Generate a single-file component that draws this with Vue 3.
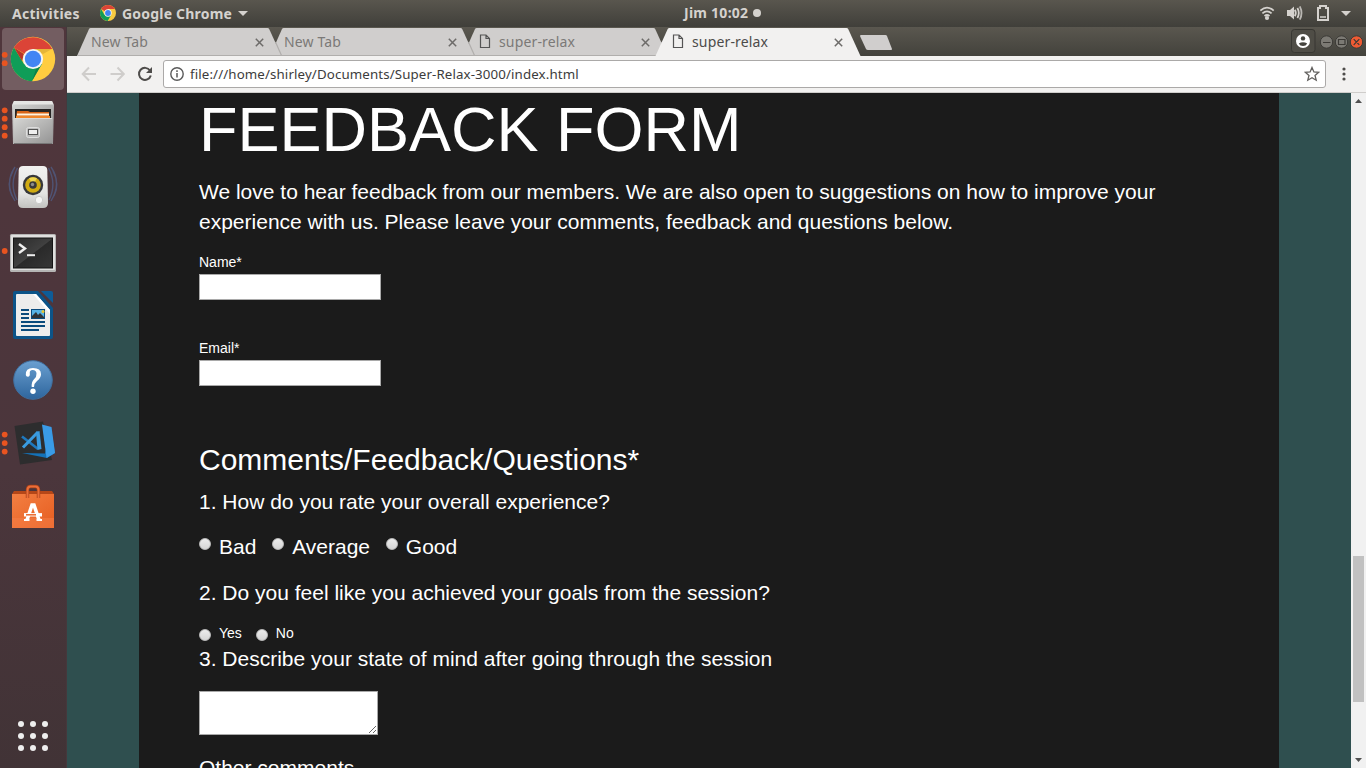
<script setup>
const tabs = [
  { title: 'New Tab', page: false, active: false },
  { title: 'New Tab', page: false, active: false },
  { title: 'super-relax', page: true, active: false },
  { title: 'super-relax', page: true, active: true },
]
const launcherDots = 9
</script>

<template>
  <div class="desktop">
    <header class="topbar">
      <span class="activities">Activities</span>
      <svg class="mini" width="16" height="16" viewBox="0 0 44 44">
        <circle cx="22" cy="22" r="22" fill="#f9cb40" />
        <path d="M22 22L3 11A22 22 0 0 1 41 11H22Z" fill="#db4437" />
        <path d="M3 11A22 22 0 0 0 21 44L31 27L12 27Z" fill="#129d58" />
        <circle cx="22" cy="22" r="10" fill="#fff" /><circle cx="22" cy="22" r="8" fill="#4285f4" />
      </svg>
      <span class="appname">Google Chrome</span>
      <i class="caret"></i>
      <span class="clock">Jim 10:02</span>
      <i class="notice"></i>
      <svg class="status" width="106" height="27" viewBox="1260 0 106 27">
        <g fill="none" stroke="#d5d2ce" stroke-width="1.8">
          <path d="M1260.3 10.6Q1267 4.6 1273.7 10.6M1262.4 13.4Q1267 9.4 1271.6 13.4M1264.5 16Q1267 14 1269.5 16" />
          <path d="M1294.8 9.8Q1296.8 13 1294.8 16.200M1297.4 8Q1300.2 13 1297.4 18" />
          <path d="M1299.8 6.400Q1303.200 13 1299.800 19.600" opacity=".8" />
          <path d="M1318 8h2v-2h6v2h2v12h-10z" stroke-width="2" />
          <path d="M1320 17h6" stroke-width="1.5" />
        </g>
        <circle cx="1267" cy="18" r="2.1" fill="#d5d2ce" />
        <path d="M1287 10h3l4-3.600v13.200l-4-3.600h-3z" fill="#d5d2ce" />
        <path d="M1341 11h10l-5 5z" fill="#d5d2ce" />
      </svg>
    </header>

    <div class="body">
      <nav class="dock">
        <svg class="item" viewBox="0 27 67 64">
          <rect x="2" y="28" width="62" height="62" rx="4" fill="#735d61" />
          <g fill="#e95420"><circle cx="4.7" cy="54.8" r="2.9" /><circle cx="4.7" cy="63.2" r="2.9" /></g>
          <circle cx="33" cy="59" r="22.2" fill="#ffcd40" />
          <path d="M33 59L14 47.5A22.2 22.2 0 0 1 52.2 49H33Z" fill="#db4437" />
          <path d="M14 47.5A22.2 22.2 0 0 0 31.9 81.2L42 64L24 64Z" fill="#0f9d58" />
          <path d="M14 47.5L22 61L24 54Z" fill="#b73429" />
          <path d="M52 49H33L43 54Z" fill="#e5b538" />
          <path d="M32 81L42 63L36 69Z" fill="#0c8148" />
          <circle cx="33" cy="59" r="10.1" fill="#f5f5f5" /><circle cx="33" cy="59" r="8.2" fill="#4285f4" />
        </svg>
        <svg class="item" viewBox="0 91 67 64">
          <defs><linearGradient id="cab" x1="0" y1="0" x2="1" y2="1"><stop offset="0" stop-color="#d6d6d4" /><stop offset="1" stop-color="#949494" /></linearGradient></defs>
          <g fill="#e95420"><circle cx="4.7" cy="110.3" r="2.9" /><circle cx="4.7" cy="118.7" r="2.9" /><circle cx="4.7" cy="127.2" r="2.9" /><circle cx="4.7" cy="135.7" r="2.9" /></g>
          <path d="M12 105L14 101H52L54 105L53 144H13Z" fill="url(#cab)" />
          <path d="M12.500 104.500L14 101H52L53.500 104.500Z" fill="#e6e6e4" />
          <path d="M15 109H51V119H15Z" fill="#262524" />
          <path d="M17 111H28L30 112H49V118H16z" fill="#d86418" /><path d="M17 113.500h32v2H17z" fill="#fff4df" /><path d="M16 116h34v2H16z" fill="#f08629" />
          <path d="M13.500 118H52.500L52 143.500H14Z" fill="url(#cab)" /><path d="M14 118.5H52" stroke="#dadada" /><path d="M14 143.5H52" stroke="#777" />
          <rect x="26.500" y="127.500" width="13" height="10" rx="2" fill="#bdbdbd" stroke="#dedede" /><rect x="28.500" y="129.500" width="9" height="5" fill="#eee" stroke="#555" />
        </svg>
        <svg class="item" viewBox="0 155 67 64">
          <defs><linearGradient id="spk" x1="0" y1="0" x2="0" y2="1"><stop offset="0" stop-color="#f2f2f0" /><stop offset=".65" stop-color="#e4e4e2" /><stop offset="1" stop-color="#c2c2bf" /></linearGradient></defs>
          <g fill="none" stroke="#505d85" stroke-width="1.4" opacity=".75"><path d="M15 167Q4 183 15 201M17.500 168Q9 184 17 200M13 171Q6 184 12 196M51 167Q62 183 51 201M48.500 168Q57 184 49 200M53 171Q60 184 54 196" /></g>
          <path d="M23 166H43Q47 166 47.300 170L48 203Q48 208 43 208H23Q18 208 18 203L18.700 170Q19 166 23 166Z" fill="url(#spk)" />
          <circle cx="33" cy="185" r="10.2" fill="#37383a" /><circle cx="33" cy="185" r="7.800" fill="#d0ab12" />
          <path d="M33 185L29 178.300A8 8 0 0 1 37 178.300Z" fill="#eed650" />
          <circle cx="33" cy="185" r="3.8" fill="#38383a" /><circle cx="32.5" cy="184.5" r="1.7" fill="#8c8c8b" />
          <circle cx="39" cy="200" r="3.7" fill="#f6f6f5" stroke="#c3c3c1" stroke-width=".8" /><rect x="24" y="199" width="4" height="4" rx="1" fill="none" stroke="#d0d0ce" />
        </svg>
        <svg class="item" viewBox="0 219 67 64">
          <defs><linearGradient id="term" x1="0" y1="0" x2="1" y2="1"><stop offset="0" stop-color="#292929" /><stop offset=".5" stop-color="#404040" /><stop offset=".52" stop-color="#2a2a2a" /><stop offset="1" stop-color="#363636" /></linearGradient></defs>
          <circle cx="4.7" cy="251" r="2.9" fill="#e95420" />
          <rect x="10" y="234" width="46" height="38" rx="1.5" fill="#b5b5b4" /><rect x="11" y="235" width="44" height="35" rx="1" fill="#e0e0df" />
          <rect x="13.5" y="238" width="39" height="30" fill="url(#term)" stroke="#151515" />
          <path d="M19 244L25 248.5L19 253" fill="none" stroke="#eee" stroke-width="2.4" /><path d="M27 255.2H35" stroke="#eee" stroke-width="2" />
        </svg>
        <svg class="item" viewBox="0 283 67 64">
          <path d="M15 291H38L53 308V337Q53 339 51 339H15Q13 339 13 337V293Q13 291 15 291Z" fill="#0c5488" />
          <path d="M41 291H51Q53 291 53 293V303Z" fill="#0e5c97" />
          <path d="M17 294H36L50 310V335Q50 336 49 336H17Q16 336 16 335V295Q16 294 17 294Z" fill="#ededec" /><path d="M36 294L50 310V314L33 294Z" fill="#fff" />
          <path d="M21 310h8M21 314h8M21 318h8M21 322h24M21 326h24M21 330h18" stroke="#0a4b7c" stroke-width="1.8" />
          <rect x="31" y="309" width="14" height="10" fill="#0a4b7c" /><path d="M32 310h12v8H32z" fill="#57b3e5" /><circle cx="43" cy="311.500" r="1.5" fill="#e8c832" /><path d="M32 318v-2l4-4 2 3 2-2 4 4v1z" fill="#303436" />
        </svg>
        <svg class="item" viewBox="0 347 67 64">
          <defs><linearGradient id="hlp" x1="0" y1="0" x2="0" y2="1"><stop offset="0" stop-color="#6a9fd0" /><stop offset="1" stop-color="#2e659d" /></linearGradient></defs>
          <circle cx="33" cy="380" r="19.3" fill="url(#hlp)" stroke="#3f6f9f" stroke-width="1" />
          <path d="M25.800 375Q25.300 368 33 368Q41 368 41 374.300Q41 378 37 381Q34.300 383 34 387H31.700Q31.300 382 34 379.300Q36.800 376.700 36.500 373.500Q36.300 369.800 32.500 369.900Q29.300 370 29.800 373.500Q30.200 376.500 27.900 376.700Q26 376.700 25.800 375Z" fill="#fff" />
          <circle cx="33" cy="391.3" r="2.7" fill="#fff" />
        </svg>
        <svg class="item" viewBox="0 411 67 64">
          <g fill="#e95420"><circle cx="4.7" cy="434.6" r="2.9" /><circle cx="4.7" cy="443.1" r="2.9" /><circle cx="4.7" cy="451.6" r="2.9" /></g>
          <path d="M14.500 426L43 421.500L52 460L20 464.500Z" fill="#2d2d2e" />
          <path d="M22 453L45 453.500L51 427L55 453L47 458Z" fill="#1472b8" /><path d="M42 424.500L51.500 427L55 453L46.500 458Z" fill="#3a9be6" />
          <path d="M22 436.500L38 449" stroke="#1f78bd" stroke-width="2.600" /><path d="M23 447.500L38 432" stroke="#3a9be0" stroke-width="3" /><path d="M36 432L39.500 431L41.500 449L37.500 450Z" fill="#3a9be0" />
        </svg>
        <svg class="item" viewBox="0 475 67 64">
          <defs><linearGradient id="bag" x1="0" y1="0" x2="1" y2="1"><stop offset="0" stop-color="#f37f42" /><stop offset="1" stop-color="#e65d20" /></linearGradient></defs>
          <path d="M12 494L14 491H52L54 494Z" fill="#b54718" /><rect x="12" y="494" width="42" height="34" fill="url(#bag)" /><path d="M12 518H54V528H12Z" fill="#f58049" opacity=".5" />
          <path d="M27.500 498V490Q27.500 486.500 30.500 486.500H35.500Q38.500 486.500 38.500 490V498" fill="none" stroke="#a94017" stroke-width="3.400" /><path d="M27.500 498V490Q27.500 486.500 30.500 486.500H35.500Q38.500 486.500 38.500 490V498" fill="none" stroke="#ea6e3a" stroke-width="2" />
          <path d="M27 520L32 505H34L39 520" fill="none" stroke="#fff" stroke-width="3.600" /><path d="M24 514.800H42" stroke="#fff" stroke-width="3.400" /><path d="M26 514.800H36" stroke="#e9672b" stroke-width="1.500" /><path d="M24 520H29.500M36.500 520H42" stroke="#fff" stroke-width="2" />
        </svg>
        <div class="launcher"><i v-for="n in launcherDots" :key="n"></i></div>
      </nav>

      <main class="window">
        <div class="strip">
          <div v-for="(t, i) in tabs" :key="i" class="tab" :class="['tab' + i, { active: t.active }]">
            <svg class="shape" width="206" height="29" viewBox="0 0 206 29">
              <path v-if="t.active" d="M-.5 29L11.700 2Q12.300 1 13.300 1H190.500Q191.600 1 192.200 2L204.500 29Z" fill="#f2f1f0" />
              <template v-else>
                <path d="M0 29L12 2Q12.600 1 13.600 1H190.500Q191.600 1 192.200 2L204.500 29Z" fill="#d0cecd" />
                <path d="M198.500 15L204.500 28.500" stroke="#b0aeac" stroke-width="1.2" />
                <path d="M.5 28.500H205" stroke="#b0aeac" />
              </template>
            </svg>
            <svg v-if="t.page" class="doc" width="12" height="15" viewBox="0 0 12 15"><path d="M1.500 1H7L10.500 4.500V13.500H1.500ZM7 1V4.500H10.500" fill="none" stroke="#555" stroke-width="1.2" /></svg>
            <span class="title">{{ t.title }}</span>
            <svg class="x" width="9" height="9" viewBox="0 0 9 9"><path d="M.8.8L8.200 8.200M8.200.8L.8 8.200" stroke="#6d6b69" stroke-width="1.5" /></svg>
          </div>
          <svg class="newtab" width="34" height="29" viewBox="858 27 34 29"><path d="M861 35H885.500Q886.500 35 887 36L892 49Q892.300 50 891 50H868Q866.500 50 866 49L860.200 36.500Q859.700 35 861 35Z" fill="#d0cecd" /></svg>
          <svg class="controls" width="80" height="29" viewBox="1286 27 80 29">
            <rect x="1291.500" y="29.500" width="23.500" height="23" rx="3" fill="#4f4d46" stroke="#383732" />
            <circle cx="1303" cy="41" r="7" fill="#fff" /><circle cx="1303" cy="38.400" r="2.200" fill="#45443e" /><path d="M1298.800 43.500Q1303 40.800 1307.200 43.500Q1306 46 1303 46Q1300 46 1298.800 43.500Z" fill="#45443e" />
            <g stroke="#3b3a36"><circle cx="1326.500" cy="42" r="6.200" fill="#7c7a74" /><circle cx="1341.500" cy="42" r="6.200" fill="#7c7a74" /><circle cx="1356.500" cy="42" r="6.200" fill="#ef5b33" /></g>
            <path d="M1323 42.500H1330.500M1338.500 39.500H1345V44.500H1338.500ZM1353.700 39.200L1359.300 44.800M1359.300 39.200L1353.700 44.800" fill="none" stroke="#3b3935" stroke-width="1.2" />
          </svg>
        </div>

        <div class="toolbar">
          <svg width="96" height="37" viewBox="67 56 96 37">
            <g fill="none" stroke="#cfcdcb" stroke-width="2"><path d="M96 74H83M89 67.500L82.700 74L89 80.500M110.500 74H123.500M117.500 67.500L123.800 74L117.500 80.500" /></g>
            <path d="M150 70.500A6 6 0 1 0 150.800 75.500" fill="none" stroke="#4e4c4a" stroke-width="2" /><path d="M152 67V73H146Z" fill="#4e4c4a" />
          </svg>
          <div class="address">
            <svg width="14" height="14" viewBox="0 0 14 14"><circle cx="7" cy="7" r="6.200" fill="none" stroke="#5a5a5a" stroke-width="1.4" /><path d="M7 6v4.500M7 3.300v1.600" stroke="#5a5a5a" stroke-width="1.500" /></svg>
            <span class="url">file:///home/shirley/Documents/Super-Relax-3000/index.html</span>
            <svg class="star" width="16" height="16" viewBox="0 0 16 16"><path d="M8 1.500L9.900 6L14.700 6.300L11 9.500L12.200 14.200L8 11.700L3.800 14.200L5 9.500L1.300 6.300L6.100 6Z" fill="none" stroke="#62605e" stroke-width="1.300" /></svg>
          </div>
          <svg class="more" width="4" height="14" viewBox="0 0 4 14" fill="#4e4c4a"><circle cx="2" cy="2" r="1.600" /><circle cx="2" cy="7" r="1.600" /><circle cx="2" cy="12" r="1.600" /></svg>
        </div>

        <div class="viewport">
          <div class="page">
            <section class="form">
              <h1>FEEDBACK FORM</h1>
              <p>We love to hear feedback from our members. We are also open to suggestions on how to improve your<br>experience with us. Please leave your comments, feedback and questions below.</p>
              <label class="field">Name*<span class="input"></span></label>
              <label class="field">Email*<span class="input"></span></label>
              <h2>Comments/Feedback/Questions*</h2>
              <p>1. How do you rate your overall experience?</p>
              <p class="options large"><span><i></i>Bad</span><span><i></i>Average</span><span><i></i>Good</span></p>
              <p>2. Do you feel like you achieved your goals from the session?</p>
              <div class="options small"><span><i></i>Yes</span><span><i></i>No</span></div>
              <p class="q3">3. Describe your state of mind after going through the session</p>
              <div class="area"><svg width="9" height="9" viewBox="0 0 9 9"><path d="M1 8L8 1M5 8L8 5" stroke="#666" stroke-width="1" /></svg></div>
              <p>Other comments</p>
            </section>
          </div>
          <div class="scroll">
            <svg width="15" height="15" viewBox="0 0 15 15"><path d="M4 10L7.500 6L11 10Z" fill="#505050" /></svg>
            <div class="thumb"></div>
            <svg class="down" width="15" height="15" viewBox="0 0 15 15"><path d="M4 5L7.500 9L11 5Z" fill="#505050" /></svg>
          </div>
        </div>
      </main>
    </div>
  </div>
</template>

<style>
html, body { margin: 0; overflow: hidden; background: #1c1c1c; }
</style>
<style scoped>
.desktop { width: 1366px; height: 768px; overflow: hidden; display: flex; flex-direction: column; font-family: "Noto Sans", "Open Sans", sans-serif; }
.desktop * { box-sizing: border-box; }
svg { display: block; flex: none; }
.topbar { height: 27px; flex: none; display: flex; align-items: center; background: linear-gradient(#59564e, #403f3a); color: #d5d2ce; font-size: 14px; font-weight: 700; white-space: nowrap; }
.activities { margin-left: 12px; width: 88px; letter-spacing: .28px; }
.mini { margin-top: -1px; }
.appname { margin-left: 6px; width: 116px; letter-spacing: .2px; }
.caret { border: 5px solid transparent; border-top-color: #d5d2ce; border-bottom: 0; }
.clock { margin-left: 436px; width: 69px; letter-spacing: .25px; position: relative; top: -1px; }
.notice { width: 8px; height: 8px; margin-top: -1px; border-radius: 50%; background: #d5d2ce; }
.status { margin-left: auto; }
.body { flex: 1; min-height: 0; display: flex; }
.dock { width: 67px; flex: none; background: linear-gradient(#50363c, #4b363c 60%, #413336); display: flex; flex-direction: column; border-right: 1px solid #45383c; }
.item { width: 67px; height: 64px; }
.launcher { margin: auto 0 17px 18px; display: grid; grid-template-columns: repeat(3, 6px); gap: 6px; }
.launcher i { height: 6px; border-radius: 50%; background: #eee; }
.window { flex: 1; min-width: 0; display: flex; flex-direction: column; }
.strip { height: 29px; flex: none; display: flex; padding-left: 10px; background: linear-gradient(#5a574f, #43423c); }
.tab { position: relative; width: 193px; height: 29px; display: flex; align-items: center; padding-left: 14px; color: #7b7977; font-size: 14px; }
.tab0 { z-index: 3; }
.tab1 { z-index: 2; }
.tab2 { z-index: 1; }
.tab.active { z-index: 4; color: #4c4b4a; }
.shape { position: absolute; left: 0; top: 0; overflow: visible; }
.doc, .title { position: relative; }
.doc { margin-left: 2px; margin-right: 8px; }
.title { line-height: 20px; white-space: nowrap; letter-spacing: .15px; }
.x { position: absolute; left: 178px; top: 11px; }
.newtab { margin-left: 9px; }
.controls { margin-left: auto; }
.toolbar { height: 37px; flex: none; display: flex; align-items: center; background: #f2f1f0; border-bottom: 1px solid #cfcdcb; }
.address { width: 1163px; height: 28px; border: 1px solid #aba9a8; border-radius: 3px; background: #fff; display: flex; align-items: center; padding: 0 5px 0 6px; color: #3c3c3c; font-size: 13.3px; }
.url { margin-left: 6px; margin-top: -1px; white-space: nowrap; letter-spacing: .12px; }
.star { margin-left: auto; }
.more { margin-left: 16px; }
.viewport { flex: 1; min-height: 0; display: flex; background: #2f4f4f; }
.page { width: 1284px; padding: 0 72px; overflow: hidden; }
.form { width: 1140px; height: 675px; overflow: hidden; padding: 5px 60px 0; background: #1b1b1b; color: #fff; font: 14px/20px "Liberation Sans", Arial, sans-serif; }
h1 { margin: 0 0 16px; font-size: 63px; line-height: 63px; font-weight: 400; }
p { margin: 0 0 15px; font-size: 21px; line-height: 30px; white-space: nowrap; }
.field { display: block; height: 86px; }
.input { display: block; width: 182px; height: 26px; margin-top: 2px; background: #fff; border: 1px solid #a9a9a9; }
h2 { margin: 19px 0 11px; font-size: 30px; line-height: 33px; font-weight: 400; }
.options { display: flex; }
.options span { display: flex; }
.options i { width: 12px; height: 12px; margin: 6px 8px 0 0; border-radius: 50%; background: linear-gradient(#ececec, #d6d6d6); border: 1px solid #bcbcbc; }
.large { gap: 15.8px; margin-bottom: 16px; }
.small { gap: 14px; height: 21px; }
.q3 { margin-bottom: 17px; }
.area { width: 179px; height: 44px; background: #fff; border: 1px solid #a9a9a9; display: flex; align-items: flex-end; justify-content: flex-end; margin-bottom: 18px; }
.scroll { width: 15px; background: #f1f1f1; display: flex; flex-direction: column; }
.thumb { width: 11px; height: 146px; margin: 448px 0 0 2px; background: #c1c1c1; }
.down { margin-top: auto; }
</style>
